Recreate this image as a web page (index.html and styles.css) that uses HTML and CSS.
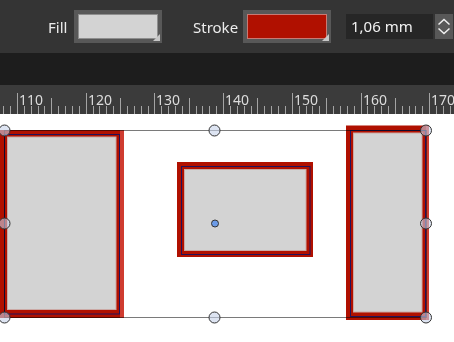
FILE: index.html
```html
<!DOCTYPE html>
<html>
<head>
<meta charset="utf-8">
<link rel="stylesheet" href="styles.css">
</head>
<body>
<div class="toolbar">
  <span class="label label-fill">Fill</span>
  <div class="swatch-frame"><div class="swatch swatch-fill"></div></div>
  <span class="label label-stroke">Stroke</span>
  <div class="swatch-frame"><div class="swatch swatch-stroke"></div></div>
  <div class="number-field">1,06 mm</div>
  <div class="spinner">
    <svg width="18" height="25" viewBox="0 0 18 25">
      <polyline points="3.5,10.5 9,5.5 14.5,10.5" fill="none" stroke="#f0f0f0" stroke-width="1.5"/>
      <polyline points="3.5,14.5 9,19.5 14.5,14.5" fill="none" stroke="#f0f0f0" stroke-width="1.5"/>
    </svg>
  </div>
</div>
<div class="band"></div>
<div class="ruler">
  <svg width="454" height="29" viewBox="0 85 454 29">
    <path class="tick" d="M3.5 106V114M10.5 106V114M24.5 106V114M31.5 106V114M38.5 106V114M44.5 106V114M58.5 106V114M65.5 106V114M72.5 106V114M79.5 106V114M93.5 106V114M99.5 106V114M106.5 106V114M113.5 106V114M127.5 106V114M134.5 106V114M141.5 106V114M148.5 106V114M161.5 106V114M168.5 106V114M175.5 106V114M182.5 106V114M196.5 106V114M202.5 106V114M209.5 106V114M216.5 106V114M230.5 106V114M237.5 106V114M244.5 106V114M251.5 106V114M264.5 106V114M271.5 106V114M278.5 106V114M285.5 106V114M299.5 106V114M306.5 106V114M312.5 106V114M319.5 106V114M333.5 106V114M340.5 106V114M347.5 106V114M354.5 106V114M367.5 106V114M374.5 106V114M381.5 106V114M388.5 106V114M402.5 106V114M409.5 106V114M415.5 106V114M422.5 106V114M436.5 106V114M443.5 106V114M450.5 106V114"/>
    <path class="tick" d="M51.5 98V114M120.5 98V114M189.5 98V114M257.5 98V114M326.5 98V114M395.5 98V114"/>
    <path class="tick" d="M17.5 93V114M86.5 93V114M154.5 93V114M223.5 93V114M292.5 93V114M361.5 93V114M429.5 93V114"/>
    <text class="ruler-label" x="19" y="105">110</text>
    <text class="ruler-label" x="88" y="105">120</text>
    <text class="ruler-label" x="156" y="105">130</text>
    <text class="ruler-label" x="225" y="105">140</text>
    <text class="ruler-label" x="294" y="105">150</text>
    <text class="ruler-label" x="363" y="105">160</text>
    <text class="ruler-label" x="431" y="105">170</text>
  </svg>
</div>
<div class="canvas">
  <svg width="454" height="228" viewBox="0 114 454 228">
    <!-- left rectangle -->
    <rect x="0" y="130" width="124" height="188" fill="#b01000"/>
    <rect x="120" y="130" width="4" height="188" fill="#cf3c30"/>
    <rect class="inner" x="7.5" y="137" width="108.5" height="172.5"/>
    <rect class="path-line" x="4.5" y="134.5" width="115" height="179.5"/>
    <!-- middle rectangle -->
    <rect x="177" y="162" width="136" height="95" fill="#b01000"/>
    <rect class="inner" x="184.5" y="169.5" width="121.5" height="81"/>
    <rect class="path-line" x="181.5" y="166.5" width="128.5" height="88"/>
    <!-- right rectangle -->
    <rect x="346" y="125.5" width="83" height="194.5" fill="#b01000"/>
    <rect x="426" y="125.5" width="3" height="194.5" fill="#cf3c30"/>
    <rect class="inner" x="353.5" y="133" width="68.5" height="179"/>
    <rect class="path-line" x="350.5" y="130.5" width="75" height="186"/>
    <!-- selection box -->
    <rect class="bbox" x="4.5" y="130.5" width="422" height="187"/>
    <circle class="handle" cx="4.5" cy="130.5" r="5.5"/>
    <circle class="handle" cx="214.5" cy="130.5" r="5.5"/>
    <circle class="handle" cx="426" cy="130.5" r="5.5"/>
    <circle class="handle" cx="4.5" cy="223.5" r="5.5"/>
    <circle class="handle" cx="426" cy="223.5" r="5.5"/>
    <circle class="handle" cx="4.5" cy="317.5" r="5.5"/>
    <circle class="handle" cx="214.5" cy="317.5" r="5.5"/>
    <circle class="handle" cx="426" cy="317.5" r="5.5"/>
    <circle class="center-dot" cx="215" cy="223.5" r="3.5"/>
  </svg>
</div>
</body>
</html>
```
FILE: styles.css
```css
html, body {
  margin: 0;
  padding: 0;
  background: #ffffff;
  overflow: hidden;
}

body {
  width: 454px;
  height: 342px;
  font-family: "Noto Sans", "Open Sans", sans-serif;
}

.toolbar {
  height: 53px;
  background: #343434;
  display: flex;
  align-items: center;
  padding-left: 48px;
  box-sizing: border-box;
}

.label {
  color: #ececec;
  font-size: 15px;
  line-height: 20px;
}

.label-fill {
  width: 26px;
}

.label-stroke {
  width: 50px;
  margin-left: 31px;
}

.swatch-frame {
  position: relative;
  width: 88px;
  height: 33px;
  box-sizing: border-box;
  padding: 4px;
  background: #585858;
}

.swatch-frame::after {
  content: "";
  position: absolute;
  right: 2px;
  bottom: 2px;
  width: 0;
  height: 0;
  border-left: 7px solid transparent;
  border-bottom: 7px solid #c6c6c6;
}

.swatch {
  height: 100%;
  box-sizing: border-box;
  border: 1px solid #8e8e8e;
}

.swatch-fill {
  background: #d3d3d3;
}

.swatch-stroke {
  background: #b01000;
  border-color: #c77a74;
}

.number-field {
  margin-left: 15px;
  width: 87px;
  height: 25px;
  box-sizing: border-box;
  padding-left: 5px;
  background: #262626;
  color: #f2f2f2;
  font-size: 15px;
  line-height: 25px;
}

.spinner {
  margin-left: 2px;
  width: 18px;
  height: 25px;
  background: #585858;
}

.spinner svg {
  display: block;
}

.band {
  height: 32px;
  background: #1d1d1d;
}

.ruler {
  height: 29px;
  background: #3b3b3b;
}

.ruler svg,
.canvas svg {
  display: block;
}

.tick {
  stroke: #a4a4a4;
  stroke-width: 1;
  fill: none;
}

.ruler-label {
  fill: #dcdcdc;
  font-family: "Noto Sans", "Open Sans", sans-serif;
  font-size: 14px;
}

.canvas {
  height: 228px;
  background: #ffffff;
}

.inner {
  fill: #d3d3d3;
  stroke: #cba9a5;
  stroke-width: 1;
}

.path-line {
  fill: none;
  stroke: #22125a;
  stroke-width: 1;
}

.bbox {
  fill: none;
  stroke: #7a7a7a;
  stroke-width: 1;
  mix-blend-mode: multiply;
}

.handle {
  fill: rgba(198, 210, 234, 0.6);
  stroke: #333333;
  stroke-width: 1;
}

.center-dot {
  fill: #6b9be8;
  stroke: #333333;
  stroke-width: 1;
}
```
